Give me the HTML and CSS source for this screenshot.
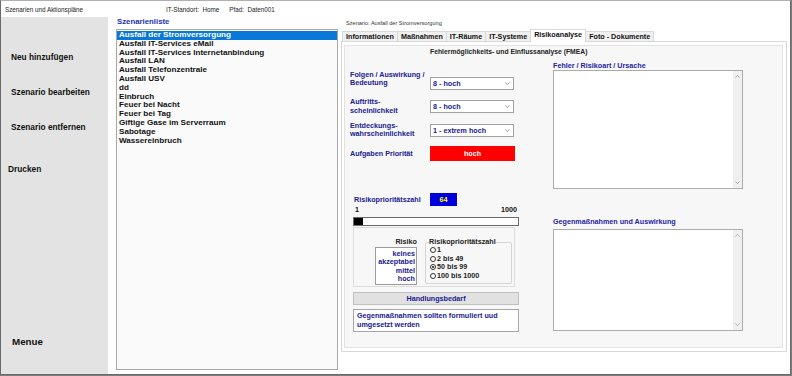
FILE: index.html
```html
<!DOCTYPE html>
<html lang="de">

<head>
    <meta charset="UTF-8">
    <meta name="viewport" content="width=device-width, initial-scale=1.0">
    <title>Szenarien und Aktionspläne</title>
    <link rel="stylesheet" href="styles.css">
</head>

<body>
    <div class="window">
        <div class="titlebar">
            <span class="app-title">Szenarien und Aktionspläne</span>
            <span>IT-Standort:&nbsp; Home</span>
            <span class="path">Pfad:&nbsp; Daten001</span>
        </div>

        <div class="main">
            <nav class="sidebar">
                <div class="side-btn">Neu hinzufügen</div>
                <div class="side-btn">Szenario bearbeiten</div>
                <div class="side-btn">Szenario entfernen</div>
                <div class="side-btn print">Drucken</div>
                <div class="side-btn menu">Menue</div>
            </nav>

            <section class="list-col">
                <h2 class="list-title">Szenarienliste</h2>
                <ul class="listbox">
                    <li class="selected">Ausfall der Stromversorgung</li>
                    <li>Ausfall IT-Services eMail</li>
                    <li>Ausfall IT-Services Internetanbindung</li>
                    <li>Ausfall LAN</li>
                    <li>Ausfall Telefonzentrale</li>
                    <li>Ausfall USV</li>
                    <li>dd</li>
                    <li>Einbruch</li>
                    <li>Feuer bei Nacht</li>
                    <li>Feuer bei Tag</li>
                    <li>Giftige Gase im Serverraum</li>
                    <li>Sabotage</li>
                    <li>Wassereinbruch</li>
                </ul>
            </section>

            <section class="detail">
                <div class="caption">Szenario: Ausfall der Stromversorgung</div>
                <div class="tabs">
                    <div class="tab">Informationen</div>
                    <div class="tab">Maßnahmen</div>
                    <div class="tab">IT-Räume</div>
                    <div class="tab">IT-Systeme</div>
                    <div class="tab active">Risikoanalyse</div>
                    <div class="tab">Foto - Dokumente</div>
                </div>

                <div class="tab-page">
                    <div class="fmea">
                        <h3 class="fmea-title">Fehlermöglichkeits- und Einflussanalyse (FMEA)</h3>
                        <div class="fmea-body">
                            <div class="fmea-left">
                                <div class="field">
                                    <div class="field-label lift">Folgen / Auswirkung / Bedeutung</div>
                                    <div class="select">
                                        <span>8 - hoch</span>
                                        <svg width="5" height="3" viewBox="0 0 5 3"><polyline points="0.3,0.3 2.5,2.6 4.7,0.3" fill="none" stroke="#8c8c8c" stroke-width="0.8"/></svg>
                                    </div>
                                </div>
                                <div class="field">
                                    <div class="field-label">Auftritts-<br>scheinlichkeit</div>
                                    <div class="select">
                                        <span>8 - hoch</span>
                                        <svg width="5" height="3" viewBox="0 0 5 3"><polyline points="0.3,0.3 2.5,2.6 4.7,0.3" fill="none" stroke="#8c8c8c" stroke-width="0.8"/></svg>
                                    </div>
                                </div>
                                <div class="field">
                                    <div class="field-label">Entdeckungs-<br>wahrscheinlichkeit</div>
                                    <div class="select">
                                        <span>1 - extrem hoch</span>
                                        <svg width="5" height="3" viewBox="0 0 5 3"><polyline points="0.3,0.3 2.5,2.6 4.7,0.3" fill="none" stroke="#8c8c8c" stroke-width="0.8"/></svg>
                                    </div>
                                </div>
                                <div class="field">
                                    <div class="field-label">Aufgaben Priorität</div>
                                    <div class="priority">hoch</div>
                                </div>

                                <div class="rpz">
                                    <div class="rpz-label">Risikoprioritätszahl</div>
                                    <div class="rpz-value">64</div>
                                </div>
                                <div class="scale"><span>1</span><span>1000</span></div>
                                <div class="bar"><div class="bar-fill"></div></div>

                                <div class="risk-box">
                                    <div class="risk-levels">
                                        <div class="risk-head">Risiko</div>
                                        <div class="levels">
                                            <div>keines</div>
                                            <div>akzeptabel</div>
                                            <div>mittel</div>
                                            <div>hoch</div>
                                        </div>
                                    </div>
                                    <fieldset class="rpz-group">
                                        <legend>Risikoprioritätszahl</legend>
                                        <div class="radio-row"><span class="radio"></span>1</div>
                                        <div class="radio-row"><span class="radio"></span>2 bis 49</div>
                                        <div class="radio-row"><span class="radio checked"></span>50 bis 99</div>
                                        <div class="radio-row"><span class="radio"></span>100 bis 1000</div>
                                    </fieldset>
                                </div>

                                <div class="need">Handlungsbedarf</div>
                                <div class="need-note">Gegenmaßnahmen sollten formuliert uud umgesetzt werden</div>
                            </div>

                            <div class="fmea-right">
                                <div class="area-label">Fehler / Risikoart / Ursache</div>
                                <div class="textarea cause">
                                    <div class="scroll">
                                        <svg width="5" height="3" viewBox="0 0 5 3"><polyline points="0.3,2.7 2.5,0.4 4.7,2.7" fill="none" stroke="#a6a6a6" stroke-width="0.8"/></svg>
                                        <svg width="5" height="3" viewBox="0 0 5 3"><polyline points="0.3,0.3 2.5,2.6 4.7,0.3" fill="none" stroke="#a6a6a6" stroke-width="0.8"/></svg>
                                    </div>
                                </div>
                                <div class="area-label second">Gegenmaßnahmen und Auswirkung</div>
                                <div class="textarea measures">
                                    <div class="scroll">
                                        <svg width="5" height="3" viewBox="0 0 5 3"><polyline points="0.3,2.7 2.5,0.4 4.7,2.7" fill="none" stroke="#a6a6a6" stroke-width="0.8"/></svg>
                                        <svg width="5" height="3" viewBox="0 0 5 3"><polyline points="0.3,0.3 2.5,2.6 4.7,0.3" fill="none" stroke="#a6a6a6" stroke-width="0.8"/></svg>
                                    </div>
                                </div>
                            </div>
                        </div>
                    </div>
                </div>
            </section>
        </div>
    </div>
</body>

</html>
```

FILE: styles.css
```css
* {
    margin: 0;
    padding: 0;
    box-sizing: border-box;
}

body {
    background: #7d7d7d;
    font-family: "Liberation Sans", Arial, sans-serif;
    font-size: 7.2px;
    font-weight: bold;
    color: #111;
}

.window {
    width: 791px;
    height: 375px;
    background: #fff;
    border: 1px solid #6a6a6a;
    border-top-color: #b0b0b0;
    display: flex;
    flex-direction: column;
}

/* title row */
.titlebar {
    height: 16px;
    display: flex;
    align-items: center;
    padding-left: 4px;
    font-size: 6.3px;
    font-weight: normal;
    color: #222;
}

.app-title {
    width: 161px;
}

.path {
    margin-left: 10px;
}

.main {
    flex: 1;
    display: flex;
    min-height: 0;
}

/* left menu */
.sidebar {
    width: 107px;
    background: #e3e3e3;
    display: flex;
    flex-direction: column;
    padding: 22.5px 0 15.5px;
}

.side-btn {
    height: 35px;
    line-height: 35px;
    padding-left: 10px;
    font-size: 8.3px;
    color: #111;
}

.side-btn.print {
    margin-top: 7px;
    padding-left: 7px;
}

.side-btn.menu {
    margin-top: auto;
    padding-left: 11px;
    font-size: 9.8px;
}

/* scenario list */
.list-col {
    width: 233px;
    padding-left: 8px;
}

.list-title {
    font-size: 7.8px;
    line-height: 9px;
    padding-left: 1px;
    margin-bottom: 3px;
    color: #2330b0;
}

.listbox {
    list-style: none;
    width: 222px;
    height: 341px;
    border: 1px solid #a8a8a8;
    background: #fafafa;
    padding: 1px 0;
    font-size: 8.1px;
}

.listbox li {
    line-height: 8.8px;
    padding-left: 2px;
    white-space: nowrap;
}

.listbox li.selected {
    background: #0a78d7;
    color: #fff;
}

/* detail area */
.detail {
    flex: 1;
    display: flex;
    flex-direction: column;
    padding: 0 3px 22px 0;
}

.caption {
    height: 12px;
    line-height: 12px;
    padding-left: 5px;
    font-size: 5.6px;
    font-weight: normal;
    color: #333;
}

.tabs {
    display: flex;
    height: 12px;
    padding-left: 2px;
    z-index: 1;
}

.tab {
    margin-top: 2px;
    margin-left: -1px;
    height: 10px;
    line-height: 9px;
    padding: 0 3px;
    border: 1px solid #d9d9d9;
    border-bottom: none;
    background: #f0f0f0;
}

.tab.active {
    margin-top: 0;
    height: 13px;
    line-height: 10px;
    background: #fff;
}

.tab-page {
    flex: 1;
    border: 1px solid #d9d9d9;
    background: #fff;
    padding: 3px 3px 3px 2px;
}

.fmea {
    height: 100%;
    border: 1px solid #e2e2e2;
    background: #f7f7f7;
}

.fmea-title {
    font-size: 6.8px;
    line-height: 9px;
    padding: 1px 0 0 85px;
    color: #222;
}

.fmea-body {
    display: flex;
}

.fmea-left {
    width: 208px;
    padding: 15.5px 0 0 5px;
}

.field {
    display: flex;
    align-items: center;
    height: 23.5px;
}

.field-label {
    width: 80px;
    line-height: 8.5px;
    color: #20208f;
}

.field-label.lift {
    margin-bottom: 8px;
}

.select {
    width: 84px;
    height: 13px;
    border: 1px solid #a2a2a2;
    background: #fff;
    display: flex;
    align-items: center;
    justify-content: space-between;
    padding: 0 3px 0 2px;
    color: #20208f;
}

.select svg {
    display: block;
}

.priority {
    width: 85px;
    height: 15px;
    line-height: 15px;
    text-align: center;
    background: #ff0000;
    color: #fff;
}

.rpz {
    display: flex;
    align-items: center;
    margin-top: 27.5px;
    padding-left: 4px;
}

.rpz-label {
    width: 76px;
    color: #20208f;
}

.rpz-value {
    width: 27px;
    height: 13px;
    line-height: 13px;
    text-align: center;
    background: #0000dd;
    color: #ffff00;
}

.scale {
    width: 166px;
    margin-left: 3px;
    padding: 0 2px;
    display: flex;
    justify-content: space-between;
    line-height: 8px;
}

.bar {
    width: 166px;
    height: 9px;
    margin: 2.5px 0 0 3px;
    border: 1px solid #6a6a6a;
    background: #fff;
}

.bar-fill {
    width: 9px;
    height: 100%;
    background: #000;
}

.risk-box {
    width: 162px;
    height: 60px;
    margin: 1.5px 0 0 3px;
    padding-top: 10px;
    border: 1px solid #dcdcdc;
    display: flex;
    align-items: flex-start;
}

.risk-levels {
    width: 63px;
    display: flex;
    flex-direction: column;
    align-items: flex-end;
}

.risk-head {
    line-height: 8px;
    color: #222;
}

.levels {
    width: 42px;
    height: 38px;
    margin-top: 1px;
    padding: 1.5px 1px 0 0;
    border: 1px solid #9c9c9c;
    background: #fff;
    text-align: right;
    line-height: 8.6px;
    color: #20208f;
}

.rpz-group {
    width: 87px;
    height: 46px;
    margin-left: 8px;
    padding: 0 0 0 3px;
    border: 1px solid #d5d5d5;
    border-radius: 2px;
}

.rpz-group legend {
    padding: 0;
    line-height: 8px;
    color: #222;
}

.radio-row {
    display: flex;
    align-items: center;
    height: 8.6px;
    line-height: 8.6px;
    color: #222;
}

.radio {
    width: 6px;
    height: 6px;
    margin: 0 1px 0 1px;
    border: 1px solid #333;
    border-radius: 50%;
    background: #fff;
    display: flex;
    align-items: center;
    justify-content: center;
}

.radio.checked::after {
    content: "";
    width: 2px;
    height: 2px;
    border-radius: 50%;
    background: #111;
}

.need {
    width: 166px;
    height: 13px;
    margin: 5px 0 0 3px;
    border: 1px solid #c0c0c0;
    background: #e1e1e1;
    text-align: center;
    line-height: 11px;
    color: #20208f;
}

.need-note {
    width: 166px;
    height: 23px;
    margin: 4px 0 0 3px;
    padding: 0.5px 3px 0;
    border: 1px solid #a6a6a6;
    background: #fff;
    line-height: 9.5px;
    color: #20208f;
}

.fmea-right {
    width: 190px;
    padding-top: 5px;
}

.area-label {
    line-height: 9px;
    color: #2525a0;
}

.area-label.second {
    margin: 28px 0 3px;
}

.textarea {
    width: 190px;
    border: 1px solid #ababab;
    background: #fff;
    display: flex;
    justify-content: flex-end;
}

.textarea.cause {
    height: 119px;
}

.textarea.measures {
    height: 102px;
}

.scroll {
    width: 9px;
    background: #f0f0f0;
    display: flex;
    flex-direction: column;
    justify-content: space-between;
    align-items: center;
    padding: 4px 0;
}

.scroll svg {
    display: block;
}
```
